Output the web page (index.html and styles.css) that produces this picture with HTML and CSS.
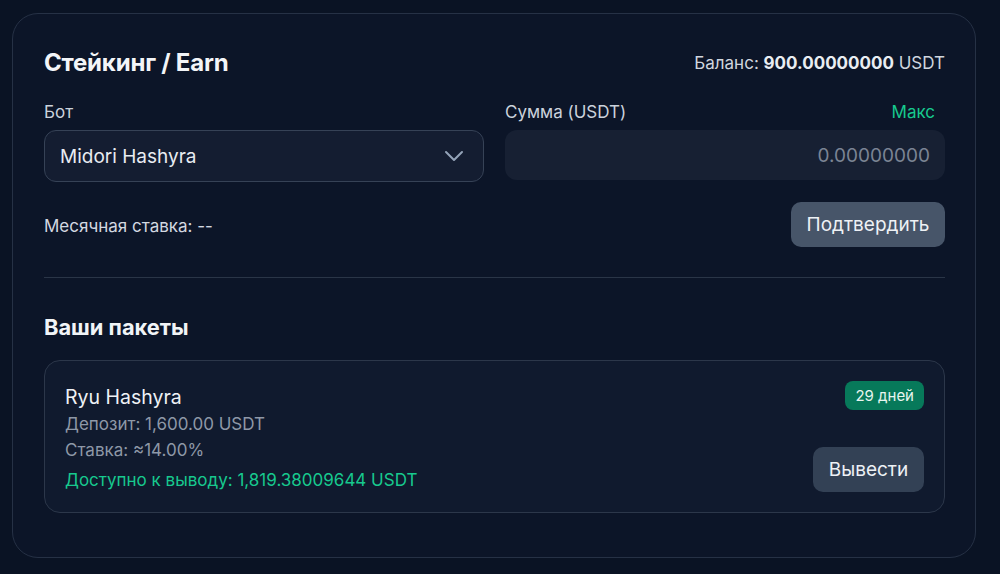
FILE: index.html
```html
<!DOCTYPE html>
<html lang="ru">
<head>
<meta charset="utf-8">
<title>Стейкинг / Earn</title>
<link rel="stylesheet" href="styles.css">
</head>
<body>
<div class="page">
  <section class="card">
    <header class="head">
      <h1 class="title">Стейкинг / Earn</h1>
      <div class="balance">Баланс: <b>900.00000000</b> USDT</div>
    </header>

    <div class="form">
      <div class="field">
        <div class="label-row"><span class="label">Бот</span></div>
        <div class="select">
          <span>Midori Hashyra</span>
          <svg class="chev" width="20" height="12" viewBox="0 0 20 12" fill="none"><path d="M2 2l8 8 8-8" stroke="#94a3b8" stroke-width="2" stroke-linecap="round" stroke-linejoin="round"/></svg>
        </div>
      </div>
      <div class="field">
        <div class="label-row"><span class="label">Сумма (USDT)</span><span class="max">Макс</span></div>
        <div class="input"><span class="placeholder">0.00000000</span></div>
      </div>
    </div>

    <div class="confirm-row">
      <span class="rate">Месячная ставка: --</span>
      <button class="btn btn-confirm">Подтвердить</button>
    </div>

    <hr class="divider">

    <h2 class="subtitle">Ваши пакеты</h2>

    <div class="package">
      <div class="pkg-info">
        <div class="pkg-name">Ryu Hashyra</div>
        <div class="pkg-muted">Депозит: 1,600.00 USDT</div>
        <div class="pkg-muted">Ставка: ≈14.00%</div>
        <div class="pkg-avail">Доступно к выводу: 1,819.38009644 USDT</div>
      </div>
      <div class="pkg-side">
        <span class="badge">29 дней</span>
        <button class="btn btn-withdraw">Вывести</button>
      </div>
    </div>
  </section>
</div>
</body>
</html>
```

FILE: styles.css
```css
* { box-sizing: border-box; }
html, body { margin: 0; padding: 0; }
body {
  background: #0a1324;
  font-family: Inter, "Noto Sans", "Liberation Sans", sans-serif;
  color: #e8ecf1;
  width: 1000px;
  height: 574px;
  overflow: hidden;
}
.page {
  padding: 13px 24px 0 12px;
}
.card {
  background: #0c1528;
  border: 1px solid #263145;
  border-radius: 26px;
  padding: 33px 30px 44px 31px;
}
.head {
  display: flex;
  justify-content: space-between;
  align-items: center;
  height: 32px;
  margin-bottom: 23px;
}
.title {
  margin: 0;
  font-size: 24px;
  font-weight: 700;
  line-height: 32px;
  color: #f3f5f8;
  letter-spacing: -0.2px;
}
.balance {
  font-size: 17px;
  color: #d0d6df;
}
.balance b { font-weight: 700; color: #e9edf2; }
.form {
  display: grid;
  grid-template-columns: 440px 440px;
  column-gap: 21px;
}
.label-row {
  display: flex;
  justify-content: space-between;
  height: 20px;
  line-height: 20px;
  margin-bottom: 8px;
}
.label { font-size: 17px; color: #cbd2dc; }
.max { font-size: 17px; color: #17c98e; margin-right: 10px; }
.select {
  height: 52px;
  border: 1px solid #364256;
  border-radius: 12px;
  background: #141d31;
  display: flex;
  align-items: center;
  justify-content: space-between;
  padding: 0 19px 0 15px;
  font-size: 19px;
  color: #e8ecf1;
}
.chev { display: block; }
.input {
  height: 50px;
  border-radius: 12px;
  background: #172033;
  display: flex;
  align-items: center;
  justify-content: flex-end;
  padding: 0 15px;
}
.placeholder { font-size: 19px; color: #7b8494; }
.confirm-row {
  margin-top: 20px;
  display: flex;
  justify-content: space-between;
  align-items: center;
}
.rate { font-size: 17px; color: #d3d8e0; padding-top: 3px; }
.btn {
  font-family: inherit;
  border: none;
  border-radius: 10px;
  font-size: 19px;
  height: 45px;
  color: #eef1f5;
  cursor: pointer;
}
.btn-confirm { background: #475569; padding: 0; width: 154px; }
.divider {
  border: none;
  border-top: 1px solid #2a3547;
  margin: 30px 0 0 0;
}
.subtitle {
  margin: 35px 0 19px 0;
  font-size: 21.8px;
  font-weight: 700;
  line-height: 28px;
  color: #f1f4f7;
}
.package {
  background: #101a2e;
  border: 1px solid #2c374a;
  border-radius: 16px;
  padding: 22px 20px 19px 20px;
  display: flex;
  justify-content: space-between;
}
.pkg-name { font-size: 19.5px; line-height: 28px; color: #eef1f5; }
.pkg-muted { font-size: 17px; line-height: 26px; color: #8e98a7; }
.pkg-avail { font-size: 17px; line-height: 26px; color: #17c98e; margin-top: 4px; }
.pkg-side {
  display: flex;
  flex-direction: column;
  justify-content: space-between;
  align-items: flex-end;
  margin: -2px 0 1px 0;
}
.badge {
  background: #07795a;
  color: #e8f5ef;
  font-size: 15px;
  height: 29px;
  line-height: 29px;
  padding: 0 10px;
  border-radius: 8px;
}
.btn-withdraw { background: #334155; width: 111px; padding: 0; }
```
